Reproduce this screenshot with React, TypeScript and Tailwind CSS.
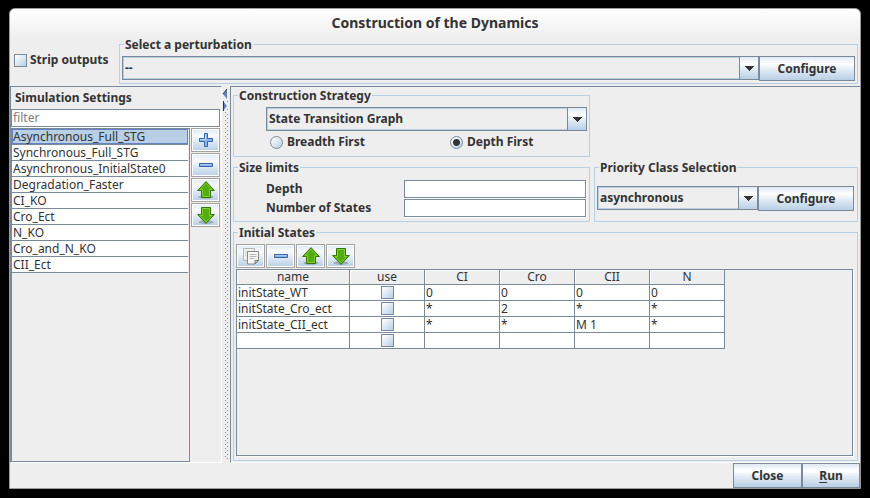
import type { ReactNode } from 'react';
import clsx from 'clsx';

const SETTINGS = [
  'Asynchronous_Full_STG',
  'Synchronous_Full_STG',
  'Asynchronous_InitialState0',
  'Degradation_Faster',
  'CI_KO',
  'Cro_Ect',
  'N_KO',
  'Cro_and_N_KO',
  'CII_Ect',
];

const COLUMNS = ['CI', 'Cro', 'CII', 'N'];

const STATES = [
  { name: 'initState_WT', values: ['0', '0', '0', '0'] },
  { name: 'initState_Cro_ect', values: ['*', '2', '*', '*'] },
  { name: 'initState_CII_ect', values: ['*', '*', 'M 1', '*'] },
  { name: '', values: ['', '', '', ''] },
];

const BUTTON_FACE = 'bg-[linear-gradient(#dfe9f4,#ffffff_30%,#dde8f3_60%,#b8cfe5)]';
const CHECKBOX =
  'block size-[13px] appearance-none border border-[#7a8a99] bg-[linear-gradient(135deg,#ffffff,#dde8f3_50%,#b8cfe5)] checked:bg-[#7a8a99]';
const TEXT_FIELD =
  'block h-[18px] w-full min-w-0 rounded-none border border-[#7a8a99] bg-white px-px font-normal shadow-[1px_1px_0_white] outline-none placeholder:text-[#808080]';

type GroupProps = { title: string; className?: string; bodyClassName?: string; children: ReactNode };

function Group({ title, className, bodyClassName, children }: GroupProps) {
  return (
    <fieldset className={clsx('min-w-0 border border-[#b8cfe5]', className)}>
      <legend className="ml-1 h-4 px-px leading-[18px]">{title}</legend>
      <div className={bodyClassName}>{children}</div>
    </fieldset>
  );
}

function Combo({ label, value }: { label: string; value: string }) {
  return (
    <div className="relative h-6 min-w-0 flex-1 border border-[#7a8a99]">
      <select
        aria-label={label}
        className="block h-full w-full appearance-none rounded-none border border-[#b8cfe5] bg-[#eeeeee] pr-6 pl-px font-bold outline-none"
      >
        <option>{value}</option>
      </select>
      <span
        className={clsx(
          'pointer-events-none absolute inset-y-0 right-0 flex w-[19px] items-center justify-center border-l border-[#7a8a99]',
          BUTTON_FACE,
        )}
      >
        <svg width="10" height="5" viewBox="0 0 10 5" shapeRendering="crispEdges">
          <path d="M0 0h10L5 5z" fill="#333333" />
        </svg>
      </span>
    </div>
  );
}

function PushButton({ className, children }: { className?: string; children: ReactNode }) {
  return (
    <button type="button" className={clsx('h-[25px] shrink-0 border border-[#7a8a99] font-bold', BUTTON_FACE, className)}>
      {children}
    </button>
  );
}

function ToolButton({ label, children }: { label: string; children: ReactNode }) {
  return (
    <button
      type="button"
      aria-label={label}
      className="flex h-6 w-[29px] shrink-0 items-center justify-center border border-[#a3a3a3] bg-[linear-gradient(#dfe9f4,#f8fafc_30%,#dde8f3_60%,#b8cfe5)] shadow-[inset_0_0_0_1px_white]"
    >
      {children}
    </button>
  );
}

function PlusIcon() {
  return (
    <svg width="16" height="16" viewBox="0 0 16 16">
      <path d="M6.5 1.5h3v5h5v3h-5v5h-3v-5h-5v-3h5z" fill="#8db4e6" stroke="#3465a4" />
      <path d="M7.5 2.5v5h-5" fill="none" stroke="#c3d8f2" />
    </svg>
  );
}

function MinusIcon() {
  return (
    <svg width="16" height="16" viewBox="0 0 16 16">
      <path d="M1.5 6.5h13v3h-13z" fill="#8db4e6" stroke="#3465a4" />
      <path d="M2.5 7.5h11" stroke="#a9c7ee" />
    </svg>
  );
}

function ArrowIcon({ down }: { down?: boolean }) {
  return (
    <svg width="18" height="18" viewBox="0 0 18 18">
      <ellipse cx="9" cy="16" rx="7.5" ry="1.8" fill="#6d7f8d" opacity="0.5" />
      <g transform={down ? 'rotate(180 9 9)' : undefined}>
        <path d="M9 .6 17.4 9.5H13.5V16.5H4.5V9.5H.6z" fill="#52ad10" stroke="#3a7304" strokeLinejoin="round" />
        <path d="M9 2.2 15 8.6H12.5V15.5H5.5V8.6H3z" fill="none" stroke="#86d23c" strokeWidth="0.9" />
      </g>
    </svg>
  );
}

function CopyIcon() {
  return (
    <svg width="18" height="18" viewBox="0 0 18 18">
      <path d="M1.5 1.5h11v12h-11z" fill="#f0f0ee" stroke="#b4b6b2" />
      <path d="M3.5 4.5h3M3.5 6.5h1M3.5 8.5h1" stroke="#c8c8c6" />
      <path d="M5.5 4.5h11v9l-3.5 3.5H5.5z" fill="#f6f6f5" stroke="#888a85" />
      <path d="M7.5 7.5h7M7.5 9.5h7M7.5 11.5h5" stroke="#b4b6b2" />
      <path d="M16.5 13.5h-3.5v3.5z" fill="#d3d3d0" stroke="#777974" strokeLinejoin="round" />
    </svg>
  );
}

function Divider() {
  return (
    <div className="flex w-2 shrink-0 flex-col items-center pb-1">
      <svg width="8" height="26" viewBox="0 0 8 26">
        <path d="M5 3v10L1 8z" fill="#6382bf" />
        <path d="M5 3 1 8" stroke="#333333" />
        <path d="M1 15v10l4-5z" fill="#6382bf" />
        <path d="M1.5 15v10" stroke="#333333" />
        <path d="M5 15h1v1H5zM5 23h1v1H5z" fill="#7a8a99" />
      </svg>
      <svg width="8" className="min-h-0 flex-1" shapeRendering="crispEdges">
        <defs>
          <pattern id="grip" width="8" height="4" patternUnits="userSpaceOnUse">
            <path d="M3 0h1v1H3zM5 2h1v1H5z" fill="#7a8a99" />
          </pattern>
        </defs>
        <rect width="8" height="100%" fill="url(#grip)" />
      </svg>
    </div>
  );
}

function SettingsPanel() {
  return (
    <section className="flex w-[212px] shrink-0 flex-col border border-[#7a8a99] border-r-white border-b-white">
      <h2 className="h-[22px] pl-1 leading-[22px]">Simulation Settings</h2>
      <div className="pr-px">
        <input type="text" placeholder="filter" aria-label="Filter settings" className={TEXT_FIELD} />
      </div>
      <div className="mt-px flex flex-1 gap-px">
        <ul className="min-w-0 flex-1 border border-[#7a8a99] font-normal">
          {SETTINGS.map((name, i) => (
            <li
              key={name}
              className={clsx(
                'mr-px h-4 border-b border-[#7a8a99] pl-px leading-[15px]',
                i === 0 ? 'bg-[#b8cfe5] shadow-[inset_0_0_0_1px_#6382bf]' : 'bg-white',
              )}
            >
              {name}
            </li>
          ))}
        </ul>
        <div className="flex flex-col gap-px pr-px">
          <ToolButton label="Add setting">
            <PlusIcon />
          </ToolButton>
          <ToolButton label="Remove setting">
            <MinusIcon />
          </ToolButton>
          <ToolButton label="Move setting up">
            <ArrowIcon />
          </ToolButton>
          <ToolButton label="Move setting down">
            <ArrowIcon down />
          </ToolButton>
        </div>
      </div>
    </section>
  );
}

function SearchRadio({ label, checked }: { label: string; checked?: boolean }) {
  return (
    <label className="flex items-center gap-1">
      <input
        type="radio"
        name="search"
        defaultChecked={checked}
        className="size-[13px] appearance-none rounded-full border border-[#7a8a99] bg-[linear-gradient(135deg,#ffffff,#dde8f3_50%,#b8cfe5)] checked:bg-[radial-gradient(#333333_3px,transparent_4px),linear-gradient(135deg,#ffffff,#dde8f3_50%,#b8cfe5)]"
      />
      {label}
    </label>
  );
}

function InitialStates() {
  return (
    <Group
      title="Initial States"
      className="flex flex-1 flex-col"
      bodyClassName="flex flex-1 flex-col pt-1 pr-1 pb-1 pl-0.5"
    >
      <div className="flex gap-px">
        <ToolButton label="Duplicate state">
          <CopyIcon />
        </ToolButton>
        <ToolButton label="Remove state">
          <MinusIcon />
        </ToolButton>
        <ToolButton label="Move state up">
          <ArrowIcon />
        </ToolButton>
        <ToolButton label="Move state down">
          <ArrowIcon down />
        </ToolButton>
      </div>
      <div className="mt-px flex-1 border border-[#7a8a99] shadow-[1px_1px_0_white]">
        <table className="w-[488px] table-fixed border-separate border-spacing-0 font-normal">
          <thead>
            <tr className="h-[15px]">
              {['name', 'use', ...COLUMNS].map((col, i) => (
                <th
                  key={col}
                  className={clsx(
                    'border-r border-b border-[#7a8a99] p-0 leading-[14px] font-normal shadow-[inset_1px_1px_0_white]',
                    i === 0 ? 'w-[113px]' : 'w-[75px]',
                  )}
                >
                  {col}
                </th>
              ))}
            </tr>
          </thead>
          <tbody className="bg-white">
            {STATES.map((state) => (
              <tr key={state.name} className="h-4">
                <td className="border-r border-b border-[#7a8a99] p-0 pl-px leading-[15px]">{state.name}</td>
                <td className="border-r border-b border-[#7a8a99] p-0">
                  <input type="checkbox" aria-label={`Use ${state.name || 'new state'}`} className={clsx('mx-auto', CHECKBOX)} />
                </td>
                {state.values.map((value, i) => (
                  <td key={COLUMNS[i]} className="border-r border-b border-[#7a8a99] p-0 pl-px leading-[15px]">
                    {value}
                  </td>
                ))}
              </tr>
            ))}
          </tbody>
        </table>
      </div>
    </Group>
  );
}

export default function App() {
  return (
    <div className="flex min-h-screen bg-black px-[9px] pt-2 pb-[9px] font-['Noto_Sans',sans-serif] text-[12px] text-[#333333]">
      <main className="flex min-w-0 flex-1 flex-col rounded-t-md border border-[#9a9a9a] bg-[#eeeeee] bg-[linear-gradient(#ffffff,#eeeeee_30px)] font-bold">
        <h1 className="h-[27px] text-center text-[14px] leading-[27px]">Construction of the Dynamics</h1>

        {/* Perturbation */}
        <div className="flex pr-0.5 pl-1">
          <label className="flex w-[105px] shrink-0 items-center gap-[3px]">
            <input type="checkbox" className={CHECKBOX} />
            Strip outputs
          </label>
          <Group title="Select a perturbation" className="flex-1" bodyClassName="flex px-0.5 pt-1 pb-0.5">
            <Combo label="Perturbation" value="--" />
            <PushButton className="w-24">Configure</PushButton>
          </Group>
        </div>

        <div className="mt-0.5 flex flex-1">
          <SettingsPanel />
          <Divider />
          <section className="flex min-w-0 flex-1 flex-col gap-0.5 border-t border-b border-l border-t-[#7a8a99] border-b-white border-l-[#7a8a99] px-0.5 pb-px">
            <div className="grid grid-cols-[1fr_264px] gap-x-1 gap-y-0.5">
              <Group title="Construction Strategy" className="col-start-1" bodyClassName="pt-1 pr-0.5 pb-1.5 pl-8">
                <div className="flex">
                  <Combo label="Construction strategy" value="State Transition Graph" />
                </div>
                <div className="mt-[3px] grid grid-cols-[180px_1fr] pl-1 leading-4">
                  <SearchRadio label="Breadth First" />
                  <SearchRadio label="Depth First" checked />
                </div>
              </Group>
              <Group title="Size limits" className="col-start-1" bodyClassName="pt-[5px] pr-[3px] pb-1 pl-8">
                <div className="grid grid-cols-[138px_1fr] items-center gap-y-px">
                  <label htmlFor="depth">Depth</label>
                  <input id="depth" type="text" className={TEXT_FIELD} />
                  <label htmlFor="states">Number of States</label>
                  <input id="states" type="text" className={TEXT_FIELD} />
                </div>
              </Group>
              <Group title="Priority Class Selection" bodyClassName="flex pt-[11px] pr-[3px] pl-0.5">
                <Combo label="Priority class" value="asynchronous" />
                <PushButton className="w-24">Configure</PushButton>
              </Group>
            </div>
            <InitialStates />
          </section>
        </div>

        <footer className="flex justify-end">
          <PushButton className="w-[69px]">Close</PushButton>
          <PushButton className="w-[58px]">
            <span className="underline underline-offset-2">R</span>un
          </PushButton>
        </footer>
      </main>
    </div>
  );
}
